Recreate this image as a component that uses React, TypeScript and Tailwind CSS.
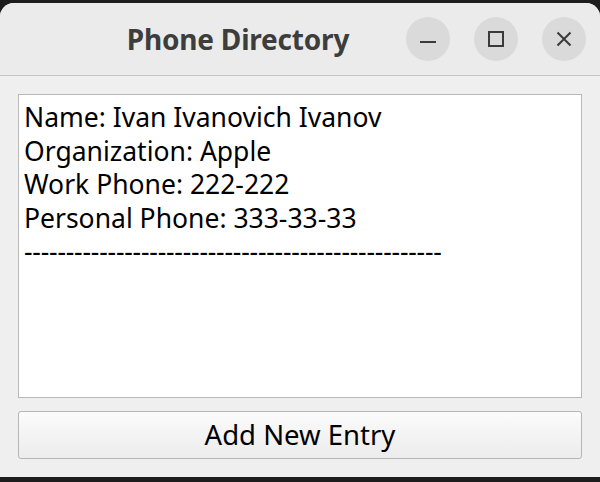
import React from "react";

const entry = [
  "Name: Ivan Ivanovich Ivanov",
  "Organization: Apple",
  "Work Phone: 222-222",
  "Personal Phone: 333-33-33",
];

function WindowButton({ children }: { children: React.ReactNode }) {
  return (
    <div className="flex h-[44px] w-[44px] items-center justify-center rounded-full bg-[#dadada]">
      {children}
    </div>
  );
}

export default function App() {
  return (
    <div
      className="flex h-[482px] w-[600px] flex-col bg-[#1d1d1d] pt-[3px] pb-[5px]"
      style={{ fontFamily: '"Noto Sans", "Open Sans", sans-serif' }}
    >
      <div className="flex flex-1 flex-col overflow-hidden rounded-t-[14px] bg-[#efefef]">
        {/* Title bar */}
        <div className="flex h-[73px] items-center border-b border-[#c4c4c4] bg-[#ebebeb] pr-[14px]">
          <div className="flex-1 pl-[70px] text-center text-[28px] font-bold tracking-[-0.2px] text-[#3d3d3d]">
            Phone Directory
          </div>
          <div className="flex gap-[24px]">
            <WindowButton>
              <svg width="16" height="16" viewBox="0 0 16 16" className="mt-[6px]">
                <rect x="0" y="7" width="16" height="2" fill="#3a3a3a" />
              </svg>
            </WindowButton>
            <WindowButton>
              <svg width="16" height="16" viewBox="0 0 16 16">
                <rect x="1" y="1" width="14" height="14" fill="none" stroke="#3a3a3a" strokeWidth="2" />
              </svg>
            </WindowButton>
            <WindowButton>
              <svg width="16" height="16" viewBox="0 0 16 16">
                <path d="M1.5 1.5 L14.5 14.5 M14.5 1.5 L1.5 14.5" stroke="#3a3a3a" strokeWidth="2" />
              </svg>
            </WindowButton>
          </div>
        </div>

        {/* Body */}
        <div className="flex flex-1 flex-col gap-[13px] px-[18px] pt-[18px] pb-[18px]">
          <div className="h-[304px] border border-[#b8b8b8] bg-white px-[5px] pt-[6px] text-[26.5px] leading-[33.6px] text-black">
            {entry.map((line) => (
              <div key={line} className="whitespace-pre">
                {line}
              </div>
            ))}
            <div className="whitespace-pre tracking-[-0.18px]">
              --------------------------------------------------
            </div>
          </div>
          <button className="h-[48px] w-full rounded-[3px] border border-[#b6b6b6] bg-gradient-to-b from-[#fbfbfb] to-[#ececec] text-[27.5px] text-black">
            Add New Entry
          </button>
        </div>
      </div>
    </div>
  );
}
